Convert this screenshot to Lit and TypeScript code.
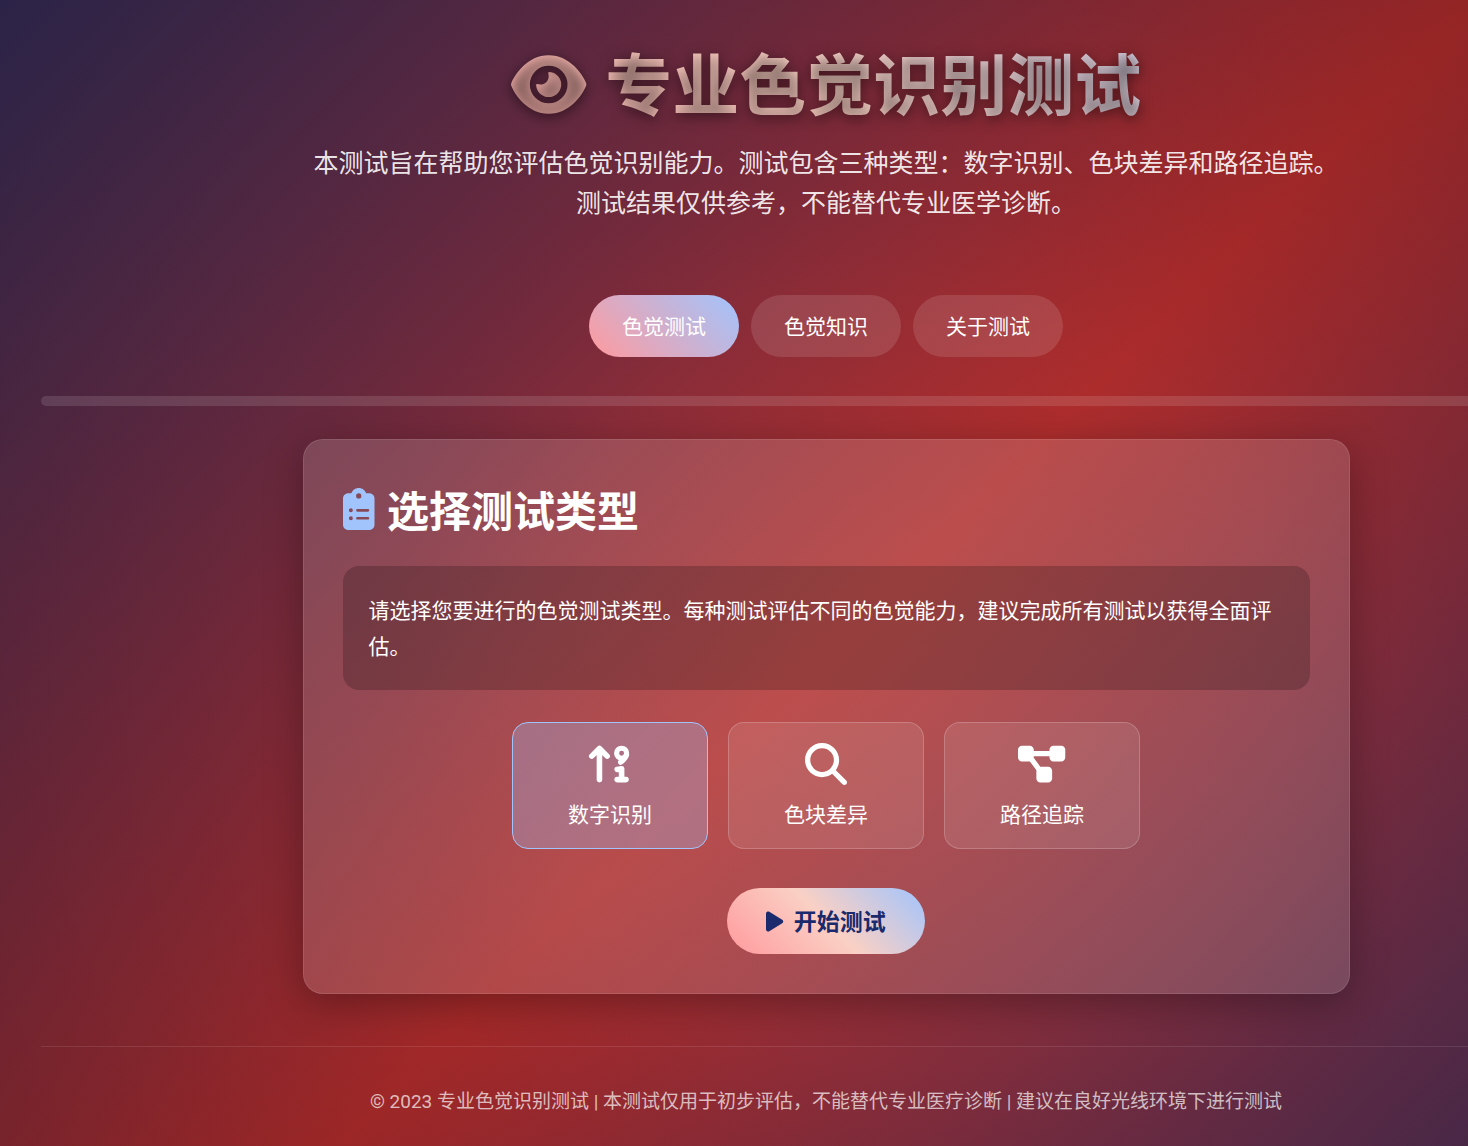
import { LitElement, html, svg, css } from "lit";
import { customElement, state } from "lit/decorators.js";

const ICONS = {
  eye: "M288 32c-80.8 0-145.5 36.8-192.6 80.6C48.6 156 17.3 208 2.5 243.7c-3.3 7.9-3.3 16.7 0 24.6C17.3 304 48.6 356 95.4 399.4C142.5 443.2 207.2 480 288 480s145.5-36.8 192.6-80.6c46.8-43.5 78.1-95.4 93-131.1c3.3-7.9 3.3-16.7 0-24.6c-14.9-35.7-46.2-87.7-93-131.1C433.5 68.8 368.8 32 288 32zM144 256a144 144 0 1 1 288 0 144 144 0 1 1 -288 0zm144-64c0 35.3-28.7 64-64 64c-7.1 0-13.9-1.2-20.3-3.3c-5.5-1.8-11.9 1.6-11.7 7.4c.3 6.9 1.3 13.8 3.2 20.7c13.7 51.2 66.4 81.6 117.6 67.9s81.6-66.4 67.9-117.6c-11.1-41.5-47.8-69.4-88.6-71.1c-5.8-.2-9.2 6.1-7.4 11.7c2.1 6.4 3.3 13.2 3.3 20.3z",
  clipboard: "M192 0c-41.8 0-77.4 26.7-90.5 64L64 64C28.7 64 0 92.7 0 128L0 448c0 35.3 28.7 64 64 64l256 0c35.3 0 64-28.7 64-64l0-320c0-35.3-28.7-64-64-64l-37.5 0C269.4 26.7 233.8 0 192 0zm0 64a32 32 0 1 1 0 64 32 32 0 1 1 0-64zM72 272a24 24 0 1 1 48 0 24 24 0 1 1 -48 0zm104-16l128 0c8.8 0 16 7.2 16 16s-7.2 16-16 16l-128 0c-8.8 0-16-7.2-16-16s7.2-16 16-16zM72 368a24 24 0 1 1 48 0 24 24 0 1 1 -48 0zm88 0c0-8.8 7.2-16 16-16l128 0c8.8 0 16 7.2 16 16s-7.2 16-16 16l-128 0c-8.8 0-16-7.2-16-16z",
  search: "M416 208c0 45.9-14.9 88.3-40 122.7L502.6 457.4c12.5 12.5 12.5 32.8 0 45.3s-32.8 12.5-45.3 0L330.7 376c-34.4 25.2-76.8 40-122.7 40C93.1 416 0 322.9 0 208S93.1 0 208 0S416 93.1 416 208zM208 352a144 144 0 1 0 0-288 144 144 0 1 0 0 288z",
  nodes: "M0 80C0 53.5 21.5 32 48 32l96 0c26.5 0 48 21.5 48 48l0 16 192 0 0-16c0-26.5 21.5-48 48-48l96 0c26.5 0 48 21.5 48 48l0 96c0 26.5-21.5 48-48 48l-96 0c-26.5 0-48-21.5-48-48l0-16-192 0 0 16c0 1.7-.1 3.4-.3 5L272 288l96 0c26.5 0 48 21.5 48 48l0 96c0 26.5-21.5 48-48 48l-96 0c-26.5 0-48-21.5-48-48l0-96c0-1.7 .1-3.4 .3-5L144 224l-96 0c-26.5 0-48-21.5-48-48L0 80z",
  play: "M73 39c-14.8-9.1-33.4-9.4-48.5-.9S0 62.6 0 80L0 432c0 17.4 9.4 33.4 24.5 41.9s33.7 8.1 48.5-.9L361 297c14.3-8.7 23-24.2 23-41s-8.7-32.2-23-41L73 39z",
};

const sortIcon = svg`
  <g fill="none" stroke="currentColor" stroke-width="68" stroke-linecap="round" stroke-linejoin="round">
    <path d="M164 66V446M70 160L164 66L258 160" />
    <circle cx="434" cy="124" r="61" stroke-width="62" />
    <path d="M494 140C490 178 452 212 422 234" stroke-width="64" />
    <path d="M380 322L434 314V446M380 446H488" stroke-width="68" />
  </g>`;

const TABS = ["色觉测试", "色觉知识", "关于测试"];

const TYPES = [
  { name: "数字识别", width: 576, art: sortIcon },
  { name: "色块差异", width: 512, art: svg`<path d=${ICONS.search} />` },
  { name: "路径追踪", width: 576, art: svg`<path d=${ICONS.nodes} />` },
];

@customElement("app-root")
export class AppRoot extends LitElement {
  @state() private tab = 0;
  @state() private type = 0;

  static styles = css`
    :host {
      display: block;
      overflow: hidden;
      color: #fff;
      font-family: "Open Sans", "Noto Sans CJK SC", sans-serif;
      font-size: 21px;
    }
    .page {
      box-sizing: border-box;
      width: calc(100% + 184px);
      min-height: 100vh;
      padding: 44px 41px 29px;
      display: flex;
      flex-direction: column;
      align-items: center;
      background:
        radial-gradient(
          circle at 55% 60%,
          rgba(255, 90, 80, 0.12),
          rgba(255, 90, 80, 0.04) 380px,
          rgba(60, 0, 0, 0.03) 520px,
          rgba(20, 0, 0, 0.18) 1040px
        ),
        linear-gradient(135deg, #302c58, #a82a2a 53%, #302c58 106%);
    }
    header {
      width: 100%;
      display: flex;
      flex-direction: column;
      align-items: center;
    }
    h1,
    h2,
    p {
      margin: 0;
    }
    .title {
      width: 100%;
      display: flex;
      align-items: center;
      justify-content: center;
      gap: 19px;
      font-size: 67px;
      line-height: 80px;
      font-weight: 700;
      color: transparent;
      background: linear-gradient(45deg, #ff9a9e, #fad0c4, #a1c4fd);
      -webkit-background-clip: text;
      background-clip: text;
      text-shadow: 0 3px 13px rgba(0, 0, 0, 0.5);
    }
    .icon {
      display: block;
      height: 1em;
      width: auto;
      fill: currentColor;
      overflow: visible;
      flex: none;
    }
    .lead {
      max-width: 1047px;
      margin-top: 18px;
      font-size: 25px;
      line-height: 40px;
      text-align: center;
      color: rgba(255, 255, 255, 0.9);
    }
    .tabs {
      display: flex;
      gap: 12px;
      margin-top: 73px;
    }
    button {
      font: inherit;
      color: inherit;
      cursor: pointer;
    }
    .tab {
      padding: 0 33px;
      line-height: 62px;
      border: 0;
      border-radius: 31px;
      background: rgba(255, 255, 255, 0.12);
    }
    .tab.active {
      background: linear-gradient(45deg, #ff9a9e, #a1c4fd);
    }
    .progress {
      width: 100%;
      height: 10px;
      margin: 39px 0 33px;
      border-radius: 5px;
      background: rgba(255, 255, 255, 0.12);
    }
    .card {
      box-sizing: border-box;
      width: 100%;
      max-width: 1047px;
      padding: 39px;
      border: 1px solid rgba(255, 255, 255, 0.1);
      border-radius: 20px;
      background: rgba(255, 255, 255, 0.15);
      box-shadow: 0 10px 39px rgba(0, 0, 0, 0.3);
      display: flex;
      flex-direction: column;
      align-items: center;
    }
    .heading {
      align-self: stretch;
      display: flex;
      align-items: center;
      gap: 13px;
      margin-bottom: 23px;
      font-size: 42px;
      line-height: 64px;
    }
    .heading .icon {
      color: #a1c4fd;
      margin-bottom: 4px;
    }
    .note {
      padding: 26px;
      border-radius: 16px;
      line-height: 36px;
      background: rgba(0, 0, 0, 0.2);
    }
    .types {
      display: flex;
      flex-wrap: wrap;
      justify-content: center;
      gap: 20px;
      margin: 32px 0 39px;
    }
    .type {
      box-sizing: border-box;
      width: 196px;
      padding: 20px 20px 19px;
      border: 1px solid rgba(255, 255, 255, 0.2);
      border-radius: 16px;
      background: rgba(255, 255, 255, 0.1);
      display: flex;
      flex-direction: column;
      align-items: center;
      gap: 14px;
      line-height: 30px;
    }
    .type .icon {
      font-size: 42px;
    }
    .type.active {
      border-color: #a1c4fd;
      background: rgba(161, 196, 253, 0.3);
    }
    .start {
      display: flex;
      align-items: center;
      gap: 10px;
      padding: 0 39px;
      border: 0;
      border-radius: 33px;
      font-size: 23px;
      font-weight: 700;
      line-height: 66px;
      color: #1a2a6c;
      background: linear-gradient(45deg, #ff9a9e, #fad0c4, #a1c4fd);
    }
    footer {
      width: 100%;
      margin-top: 52px;
      padding-top: 40px;
      border-top: 1px solid rgba(255, 255, 255, 0.1);
      font-family: Roboto, "Noto Sans CJK SC", sans-serif;
      font-size: 19px;
      line-height: 30px;
      text-align: center;
      color: rgba(255, 255, 255, 0.7);
    }
  `;

  render() {
    return html`
      <div class="page">
        <header>
          <h1 class="title">
            <svg class="icon" viewBox="0 0 576 512" aria-hidden="true">
              <defs>
                <linearGradient id="tint" x1="0" y1="1" x2="1" y2="0">
                  <stop offset="0" stop-color="#fdb2ae" />
                  <stop offset="1" stop-color="#fcbab3" />
                </linearGradient>
                <filter id="soft" x="-30%" y="-30%" width="160%" height="160%">
                  <feGaussianBlur stdDeviation="50" />
                </filter>
              </defs>
              <path d=${ICONS.eye} fill="url(#tint)" />
              <path d=${ICONS.eye} fill="#000" fill-opacity="0.5" filter="url(#soft)" transform="translate(0 23)" />
            </svg>
            <span>专业色觉识别测试</span>
          </h1>
          <p class="lead">
            本测试旨在帮助您评估色觉识别能力。测试包含三种类型：数字识别、色块差异和路径追踪。测试结果仅供参考，不能替代专业医学诊断。
          </p>
        </header>
        <nav class="tabs">
          ${TABS.map(
            (name, i) => html`<button class="tab ${i === this.tab ? "active" : ""}" @click=${() => (this.tab = i)}>${name}</button>`
          )}
        </nav>
        <div class="progress"></div>
        <main class="card">
          <h2 class="heading">
            <svg class="icon" viewBox="0 0 384 512" aria-hidden="true"><path d=${ICONS.clipboard} /></svg>
            <span>选择测试类型</span>
          </h2>
          <p class="note">请选择您要进行的色觉测试类型。每种测试评估不同的色觉能力，建议完成所有测试以获得全面评估。</p>
          <div class="types">
            ${TYPES.map(
              (t, i) => html`
                <button class="type ${i === this.type ? "active" : ""}" @click=${() => (this.type = i)}>
                  <svg class="icon" viewBox="0 0 ${t.width} 512" aria-hidden="true">${t.art}</svg>
                  <span>${t.name}</span>
                </button>
              `
            )}
          </div>
          <button class="start">
            <svg class="icon" viewBox="0 0 384 512" aria-hidden="true"><path d=${ICONS.play} /></svg>
            <span>开始测试</span>
          </button>
        </main>
        <footer>© 2023 专业色觉识别测试 | 本测试仅用于初步评估，不能替代专业医疗诊断 | 建议在良好光线环境下进行测试</footer>
      </div>
    `;
  }
}
